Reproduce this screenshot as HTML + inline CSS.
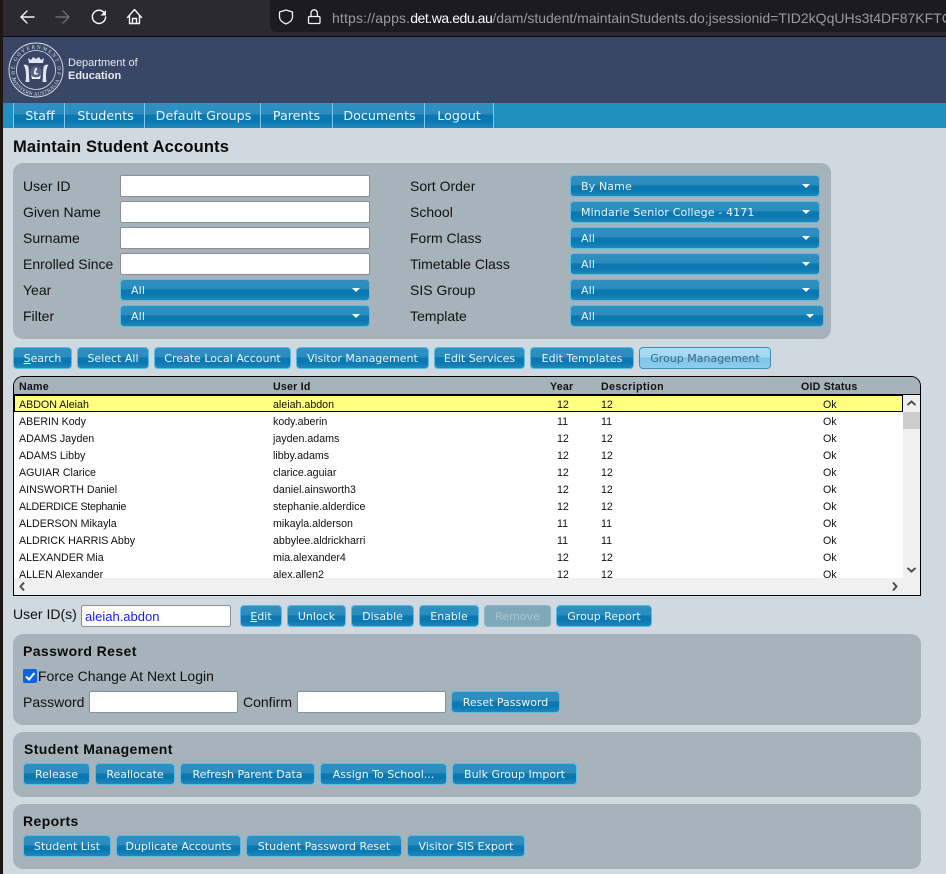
<!DOCTYPE html>
<html><head><meta charset="utf-8"><title>Maintain Student Accounts</title>
<style>
*{box-sizing:border-box}
html,body{margin:0;padding:0;width:946px;height:874px;overflow:hidden;background:#d0d8e0;font-family:"Liberation Sans",Arial,sans-serif;color:#0a0a0a}
.a{position:absolute}
.l{position:absolute;font-size:14px;line-height:16px;white-space:nowrap;color:#111}
.p{position:absolute;background:#a7b3bb;border-radius:10px}
.i{position:absolute;height:22px;background:#fff;border:1px solid #8d8d99;border-radius:2px}
.b,.s,.n{background:linear-gradient(#2f90c0 0,#2c8cbe 46%,#0a78b1 47%,#0a78b1 72%,#2187ba 100%)}
.b{position:absolute;height:22px;border:1px solid #59bde8;border-radius:4px;color:#f2f8fb;font:11px/22px "DejaVu Sans",Verdana,sans-serif;letter-spacing:0;text-align:center;white-space:nowrap}
.b.g{background:linear-gradient(#a9dcf5 0,#a5daf4 46%,#7cc5ea 47%,#8ccdee 100%);border-color:#3f8fb8;color:#3f6780}
.b.d{background:linear-gradient(#7fa9bb 0,#7fa9bb 100%);border-color:#8fb4c4;color:#a9c6d2}
.s{position:absolute;height:22px;border:1px solid #59bde8;border-radius:4px;color:#eef6fa;font:11px/21px "DejaVu Sans",Verdana,sans-serif;letter-spacing:.13px;padding-left:10px;white-space:nowrap}
.s:after{content:"";position:absolute;right:9px;top:8px;border-left:4px solid transparent;border-right:4px solid transparent;border-top:4px solid #fff}
.n{position:absolute;top:103px;height:25px;border-right:1px solid #7cc8ee;color:#eef6fa;font:12.7px/25px "DejaVu Sans",Verdana,sans-serif;text-align:center;white-space:nowrap}
.h{position:absolute;font-size:10.67px;font-weight:bold;line-height:14px;top:380px;white-space:nowrap;color:#111;letter-spacing:.2px}
.r{position:absolute;left:14px;width:889px;height:17px;font-size:10.67px;line-height:21px;white-space:nowrap;color:#111;overflow:hidden}
.r span{position:absolute;top:0}
.r .c1{left:5px}.r .c2{left:259px}.r .c3{left:543px}.r .c4{left:587px}.r .c5{left:809px}
.t{position:absolute;font-size:14px;font-weight:bold;line-height:16px;letter-spacing:.4px;color:#0a0a0a;white-space:nowrap}
</style></head>
<body>
<!-- browser chrome -->
<div class="a" style="left:0;top:0;width:946px;height:36px;background:#2b2a33"></div>
<div class="a" style="left:270px;top:0;width:676px;height:32px;background:#1c1b22;border-bottom-left-radius:6px"></div>
<div class="a" style="left:0;top:36px;width:946px;height:1px;background:#0b0b0f"></div>
<svg class="a" style="left:0;top:0" width="330" height="36" fill="none" stroke-linecap="round" stroke-linejoin="round">
<path d="M34 17H21M27 11l-6 6 6 6" stroke="#f4f4f6" stroke-width="1.4"/>
<path d="M56 17h13M63 11l6 6-6 6" stroke="#6d6c73" stroke-width="1.4"/>
<path d="M104 12.5A6.6 6.6 0 1 0 105.6 17" stroke="#f4f4f6" stroke-width="1.5"/>
<path d="M106 10v5.500h-5.500z" fill="#f4f4f6"/>
<path d="M127.500 17.500l7-8 7 8M129.500 15.500v8h10v-8M132.500 23.500v-5h4v5" stroke="#f4f4f6" stroke-width="1.4"/>
<path d="M286 10l6.500 2v5c0 3.500-3 5.500-6.500 7-3.500-1.500-6.500-3.500-6.500-7v-5z" stroke="#f4f4f6" stroke-width="1.3"/>
<rect x="308.500" y="16.500" width="11.500" height="7" rx="1.200" stroke="#f4f4f6" stroke-width="1.300"/>
<path d="M311 16.500V13a3.200 3.200 0 0 1 6.400 0v3.500" stroke="#f4f4f6" stroke-width="1.300"/>
</svg>
<div class="a" style="left:332px;top:9px;width:614px;height:18px;overflow:hidden;font:14px/18px 'Liberation Sans',sans-serif;white-space:nowrap;color:#9a9aa2;letter-spacing:.15px">https://apps.<span style="color:#fbfbfe;letter-spacing:-.45px">det.wa.edu.au</span><span style="letter-spacing:0">/dam/student/maintainStudents.do;jsessionid=TID2kQqUHs3t4DF87KFTCS</span></div>
<!-- header -->
<div class="a" style="left:0;top:37px;width:946px;height:66px;background:#3a4665"></div>
<svg class="a" style="left:7.500px;top:41.500px" width="58" height="58" fill="none" stroke="#dfe4ec">
<defs>
<path id="arcT" d="M8.500 37.100A21.500 21.500 0 1 1 47.500 37.100"/>
<path id="arcB" d="M4 36.700A25.500 25.500 0 0 0 52 36.700"/>
</defs>
<circle cx="28" cy="28" r="27" stroke-width=".9"/>
<circle cx="28" cy="28" r="19.500" stroke-width=".8"/>
<text font-family="Liberation Serif,serif" font-size="5.200" fill="#dfe4ec" stroke="none" letter-spacing="1.600"><textPath href="#arcT">THE GOVERNMENT OF</textPath></text>
<text font-family="Liberation Serif,serif" font-size="5.200" fill="#dfe4ec" stroke="none" letter-spacing=".3"><textPath href="#arcB" startOffset="1">WESTERN AUSTRALIA</textPath></text>
<path d="M21 21l-1-5 3 2 2-3 3 2 3-2 2 3 3-2-1 5z" fill="#dfe4ec" stroke="none"/>
<path d="M15.500 23c2.500 3 3 11 2 17h4c-.5-5-.5-11-1-15-1-2-3-3-5-2zM40.500 23c-2.500 3-3 11-2 17h-4c.5-5 .5-11 1-15 1-2 3-3 5-2z" fill="#dfe4ec" stroke="none"/>
<circle cx="28" cy="30" r="6" fill="#55617f" stroke="none"/>
<path d="M23 33c2 3 8 3 10 0l-1 4h-8zM27 26c2-1 3 1 1 3-1 1.500 1 2.500 3 2.500-2 2-6 1.500-5-1.500z" fill="#eef1f5" stroke="none"/>
</svg>
<div class="a" style="left:68px;top:57px;font-size:11px;line-height:13px;color:#e6eaf0;white-space:nowrap">Department of</div>
<div class="a" style="left:68px;top:70px;font-size:11px;line-height:13px;font-weight:bold;color:#e6eaf0;white-space:nowrap">Education</div>
<!-- nav -->
<div class="a" style="left:0;top:103px;width:946px;height:25px;background:#2090c0"></div>
<div class="a" style="left:13px;top:103px;width:1px;height:25px;background:#7cc8ee"></div>
<div class="n" style="left:14px;width:51px;padding-left:2px">Staff</div>
<div class="n" style="left:65px;width:80px;padding-left:2px">Students</div>
<div class="n" style="left:145px;width:116px;padding-left:2px">Default Groups</div>
<div class="n" style="left:261px;width:72px">Parents</div>
<div class="n" style="left:333px;width:92px;padding-left:2px">Documents</div>
<div class="n" style="left:425px;width:69px">Logout</div>
<!-- title -->
<div class="a" style="left:13px;top:137px;font-size:16.500px;line-height:20px;font-weight:bold;letter-spacing:.16px;white-space:nowrap;color:#0a0a0a">Maintain Student Accounts</div>
<!-- filter panel -->
<div class="p" style="left:13px;top:163px;width:818px;height:176px"></div>
<div class="l" style="left:23px;top:178px">User ID</div>
<div class="l" style="left:23px;top:204px">Given Name</div>
<div class="l" style="left:23px;top:230px">Surname</div>
<div class="l" style="left:23px;top:256px">Enrolled Since</div>
<div class="l" style="left:23px;top:282px">Year</div>
<div class="l" style="left:23px;top:308px">Filter</div>
<div class="i" style="left:120px;top:175px;width:250px"></div>
<div class="i" style="left:120px;top:201px;width:250px"></div>
<div class="i" style="left:120px;top:227px;width:250px"></div>
<div class="i" style="left:120px;top:253px;width:250px"></div>
<div class="s" style="left:120px;top:279px;width:250px">All</div>
<div class="s" style="left:120px;top:305px;width:250px">All</div>
<div class="l" style="left:410px;top:178px">Sort Order</div>
<div class="l" style="left:410px;top:204px">School</div>
<div class="l" style="left:410px;top:230px">Form Class</div>
<div class="l" style="left:410px;top:256px">Timetable Class</div>
<div class="l" style="left:410px;top:282px">SIS Group</div>
<div class="l" style="left:410px;top:308px">Template</div>
<div class="s" style="left:570px;top:175px;width:250px">By Name</div>
<div class="s" style="left:570px;top:201px;width:250px">Mindarie Senior College - 4171</div>
<div class="s" style="left:570px;top:227px;width:250px">All</div>
<div class="s" style="left:570px;top:253px;width:250px">All</div>
<div class="s" style="left:570px;top:279px;width:250px">All</div>
<div class="s" style="left:570px;top:305px;width:254px">All</div>
<!-- action row -->
<div class="b" style="left:13px;top:347px;width:59px"><u>S</u>earch</div>
<div class="b" style="left:77px;top:347px;width:72px">Select All</div>
<div class="b" style="left:154px;top:347px;width:137px">Create Local Account</div>
<div class="b" style="left:296px;top:347px;width:133px">Visitor Management</div>
<div class="b" style="left:434px;top:347px;width:91px">Edit Services</div>
<div class="b" style="left:530px;top:347px;width:104px">Edit Templates</div>
<div class="b g" style="left:639px;top:347px;width:132px">Group Management</div>
<!-- table -->
<div class="a" style="left:13px;top:376px;width:908px;height:220px;border:1px solid #000;border-radius:10px 10px 0 0;background:#fff;overflow:hidden">
  <div class="a" style="left:0;top:0;width:906px;height:17px;background:#a7b3bb"></div>
  <div class="a" style="left:0;top:17px;width:906px;height:1px;background:#000"></div>
  <div class="a" style="left:889px;top:18px;width:17px;height:200px;background:#f0f0f0"></div>
  <div class="a" style="left:0;top:201px;width:906px;height:17px;background:#f0f0f0"></div>
  <div class="a" style="left:889px;top:35px;width:17px;height:17px;background:#cdcdcd"></div>
</div>
<div class="h" style="left:19px">Name</div>
<div class="h" style="left:273px">User Id</div>
<div class="h" style="left:550px">Year</div>
<div class="h" style="left:601px;letter-spacing:.4px">Description</div>
<div class="h" style="left:801px">OID Status</div>
<div class="a" style="left:14px;top:395px;width:889px;height:17px;background:#ffff80;border:1px solid #000"></div>
<div class="r" style="top:395px"><span class="c1">ABDON Aleiah</span><span class="c2">aleiah.abdon</span><span class="c3">12</span><span class="c4">12</span><span class="c5">Ok</span></div>
<div class="r" style="top:412px"><span class="c1">ABERIN Kody</span><span class="c2">kody.aberin</span><span class="c3">11</span><span class="c4">11</span><span class="c5">Ok</span></div>
<div class="r" style="top:429px"><span class="c1">ADAMS Jayden</span><span class="c2">jayden.adams</span><span class="c3">12</span><span class="c4">12</span><span class="c5">Ok</span></div>
<div class="r" style="top:446px"><span class="c1">ADAMS Libby</span><span class="c2">libby.adams</span><span class="c3">12</span><span class="c4">12</span><span class="c5">Ok</span></div>
<div class="r" style="top:463px"><span class="c1">AGUIAR Clarice</span><span class="c2">clarice.aguiar</span><span class="c3">12</span><span class="c4">12</span><span class="c5">Ok</span></div>
<div class="r" style="top:480px"><span class="c1">AINSWORTH Daniel</span><span class="c2">daniel.ainsworth3</span><span class="c3">12</span><span class="c4">12</span><span class="c5">Ok</span></div>
<div class="r" style="top:497px"><span class="c1" style="letter-spacing:-.25px">ALDERDICE Stephanie</span><span class="c2">stephanie.alderdice</span><span class="c3">12</span><span class="c4">12</span><span class="c5">Ok</span></div>
<div class="r" style="top:514px"><span class="c1">ALDERSON Mikayla</span><span class="c2">mikayla.alderson</span><span class="c3">11</span><span class="c4">11</span><span class="c5">Ok</span></div>
<div class="r" style="top:531px"><span class="c1">ALDRICK HARRIS Abby</span><span class="c2">abbylee.aldrickharri</span><span class="c3">11</span><span class="c4">11</span><span class="c5">Ok</span></div>
<div class="r" style="top:548px"><span class="c1">ALEXANDER Mia</span><span class="c2">mia.alexander4</span><span class="c3">12</span><span class="c4">12</span><span class="c5">Ok</span></div>
<div class="r" style="top:565px;height:13px"><span class="c1">ALLEN Alexander</span><span class="c2">alex.allen2</span><span class="c3">12</span><span class="c4">12</span><span class="c5">Ok</span></div>
<svg class="a" style="left:0;top:376px" width="946" height="220" fill="none" stroke="#505050" stroke-width="2">
<path d="M907.500 29l4-3.500 4 3.500M907.500 192l4 3.500 4-3.500M893 206.500l3.500 4-3.500 4M24 206.500l-3.500 4 3.500 4"/>
</svg>
<!-- user id row -->
<div class="l" style="left:13px;top:606px">User ID(s)</div>
<div class="i" style="left:81px;top:605px;width:150px;color:#1a1aff;font-size:13px;line-height:21px;padding-left:3px">aleiah.abdon</div>
<div class="b" style="left:240px;top:605px;width:42px"><u>E</u>dit</div>
<div class="b" style="left:287px;top:605px;width:59px">Unlock</div>
<div class="b" style="left:351px;top:605px;width:63px">Disable</div>
<div class="b" style="left:419px;top:605px;width:60px">Enable</div>
<div class="b d" style="left:484px;top:605px;width:67px">Remove</div>
<div class="b" style="left:556px;top:605px;width:96px">Group Report</div>
<!-- password -->
<div class="p" style="left:13px;top:634px;width:908px;height:91px"></div>
<div class="t" style="left:23px;top:643px">Password Reset</div>
<div class="a" style="left:23px;top:669px;width:14px;height:14px;background:#0a63e6;border-radius:2px"></div>
<svg class="a" style="left:23px;top:669px" width="14" height="14" fill="none"><path d="M3 7.500l3 3 5.500-6.500" stroke="#fff" stroke-width="2"/></svg>
<div class="l" style="left:38px;top:668px">Force Change At Next Login</div>
<div class="l" style="left:23px;top:694px">Password</div>
<div class="i" style="left:89px;top:691px;width:149px"></div>
<div class="l" style="left:243px;top:694px">Confirm</div>
<div class="i" style="left:297px;top:691px;width:149px"></div>
<div class="b" style="left:451px;top:691px;width:109px">Reset Password</div>
<!-- student management -->
<div class="p" style="left:13px;top:732px;width:908px;height:65px"></div>
<div class="t" style="left:24px;top:741px">Student Management</div>
<div class="b" style="left:23px;top:763px;width:67px">Release</div>
<div class="b" style="left:95px;top:763px;width:80px">Reallocate</div>
<div class="b" style="left:180px;top:763px;width:135px">Refresh Parent Data</div>
<div class="b" style="left:320px;top:763px;width:127px">Assign To School...</div>
<div class="b" style="left:452px;top:763px;width:125px">Bulk Group Import</div>
<!-- reports -->
<div class="p" style="left:13px;top:804px;width:908px;height:65px"></div>
<div class="t" style="left:23px;top:813px">Reports</div>
<div class="b" style="left:23px;top:835px;width:88px">Student List</div>
<div class="b" style="left:116px;top:835px;width:125px">Duplicate Accounts</div>
<div class="b" style="left:246px;top:835px;width:156px">Student Password Reset</div>
<div class="b" style="left:407px;top:835px;width:118px">Visitor SIS Export</div>
<!-- left window edge -->
<div class="a" style="left:0;top:0;width:3px;height:874px;background:#1e1713"></div>
</body></html>
